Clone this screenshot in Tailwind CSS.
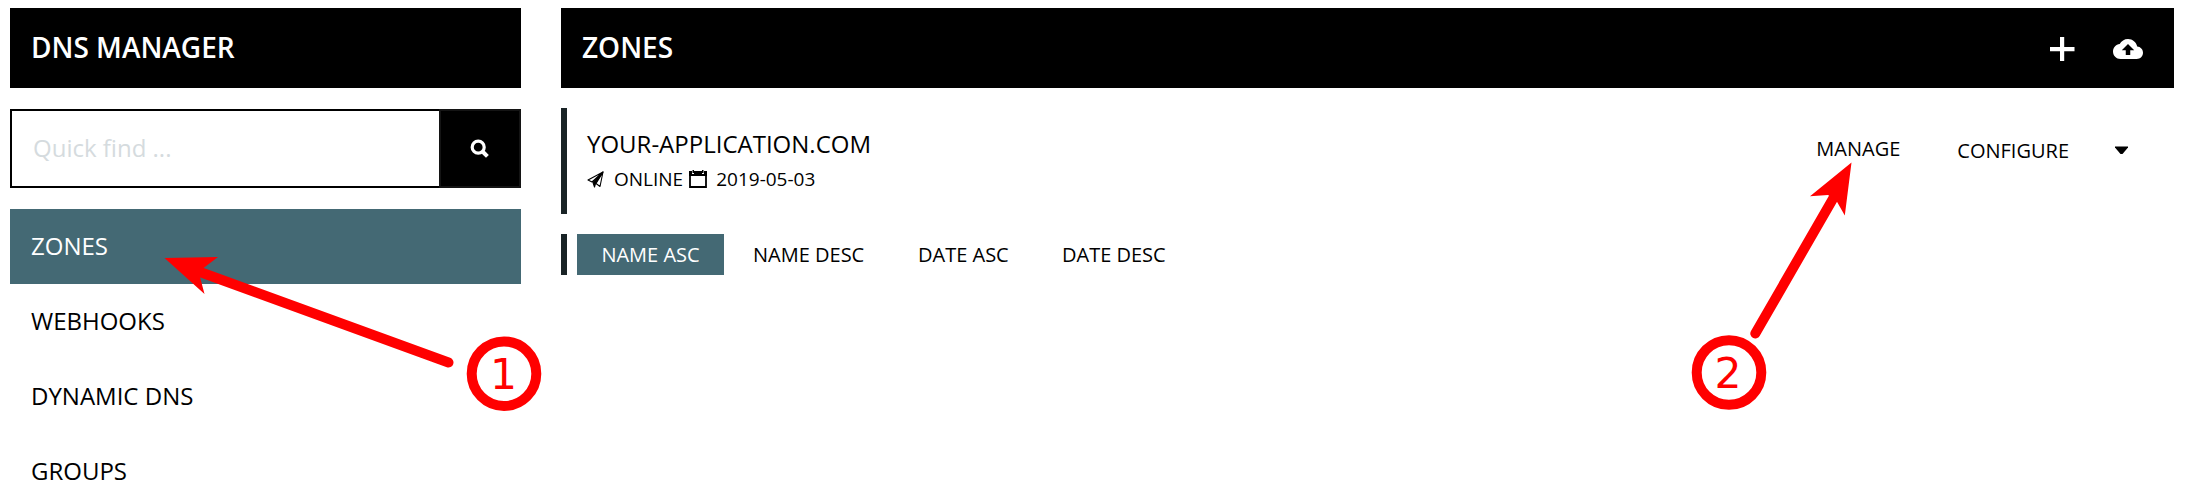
<!DOCTYPE html>
<html lang="en">
<head>
<meta charset="utf-8">
<title>DNS Manager</title>
<script src="https://cdn.jsdelivr.net/npm/@tailwindcss/browser@4"></script>
</head>
<body class="relative flex h-[497px] w-[2186px] gap-10 overflow-hidden bg-white pt-2 pr-3 pl-2.5 font-['Open_Sans',sans-serif] text-black">
  <aside class="flex w-[511px] shrink-0 flex-col">
    <h1 class="flex h-20 shrink-0 items-center bg-black px-[21px] pb-0.5 text-[28px] font-semibold text-white">DNS MANAGER</h1>
    <form class="mt-[21px] flex h-[79px] shrink-0">
      <input class="h-full min-w-0 flex-1 border-2 border-r-0 border-black px-[21px] pb-0.5 text-2xl placeholder:text-[#d5dbde]" placeholder="Quick find ...">
      <button type="button" class="flex w-[82px] items-center justify-center border-2 border-[#141414] bg-black pt-px" aria-label="Search">
        <svg class="size-5" viewBox="0 0 20 20" fill="none" stroke="#fff"><circle cx="8.2" cy="8.2" r="6" stroke-width="3.200"/><path d="M12.500 12.500l4.900 4.900" stroke-width="4"/></svg>
      </button>
    </form>
    <nav class="mt-[21px] flex shrink-0 flex-col text-2xl">
      <a class="flex h-[75px] items-center bg-[#446974] px-[21px] pb-px text-white">ZONES</a>
      <a class="flex h-[75px] items-center px-[21px] pb-px">WEBHOOKS</a>
      <a class="flex h-[75px] items-center px-[21px] pb-px">DYNAMIC DNS</a>
      <a class="flex h-[75px] items-center px-[21px] pb-px">GROUPS</a>
    </nav>
  </aside>
  <main class="flex min-w-0 flex-1 flex-col">
    <header class="flex h-20 items-center bg-black pr-[31px] pl-[21px] text-white">
      <h2 class="flex-1 pb-0.5 text-[28px] font-semibold">ZONES</h2>
      <svg class="mt-[3px] mr-[38px] size-[25px]" viewBox="0 0 25 25" fill="#fff"><path d="M10 0h4.200v10H24.500v4.200H14.200V24H10V14.200H0V10h10z"/></svg>
      <svg class="mt-0.5 h-[20px] w-[30px]" viewBox="0 4 24 16" preserveAspectRatio="none" fill="#fff"><path d="M19.350 10.040C18.670 6.590 15.640 4 12 4 9.110 4 6.600 5.640 5.350 8.040 2.340 8.360 0 10.910 0 14c0 3.310 2.690 6 6 6h13c2.760 0 5-2.240 5-5 0-2.640-2.050-4.780-4.650-4.960zM13.800 13v3.800h-3.600V13H7l5-5 5 5h-3.200z"/></svg>
    </header>
    <section class="mt-5 flex h-[106px] border-l-[6px] border-[#192326] pl-5">
      <div class="flex flex-1 flex-col pt-5">
        <div class="text-2xl leading-8">YOUR-APPLICATION.COM</div>
        <div class="mt-[3px] flex h-8 items-center text-[19px] leading-8">
          <svg class="size-[17px]" viewBox="0 0 17 17" fill="none" stroke="#000" stroke-width="1.100" stroke-linejoin="round"><path d="M16 1L1 9l4 2L16 1l-3 14.500-4-3z"/><path d="M6 11.500L16 1 8.500 12.500 7.500 16z" fill="#000"/></svg>
          <span class="ml-2.5">ONLINE</span>
          <svg class="ml-1.5 h-[18px] w-[18px]" viewBox="0 0 18 18"><path d="M1 2v15h16V2" fill="none" stroke="#000" stroke-width="1.800"/><path d="M0 1h3v3h2V1h8v3h2V1h3v5H0z"/><path d="M3.500 0h1.500v3H3.500zM13 0h1.500v3H13z"/></svg>
          <span class="ml-[9px]">2019-05-03</span>
        </div>
      </div>
      <div class="flex items-start pt-[25px] text-xl leading-8 whitespace-nowrap">
        <span class="mr-[57px]">MANAGE</span>
        <span class="mt-0.5 mr-[46px]">CONFIGURE</span>
        <svg class="mt-[13px] mr-[46px] h-[9px] w-[13px]" viewBox="0 0 13 9"><path d="M0 .5h13v1L7.500 8h-2L0 1.500z"/></svg>
      </div>
    </section>
    <div class="mt-5 flex h-[41px] border-l-[6px] border-[#192326] pl-2.5 text-xl leading-[42px] whitespace-nowrap">
      <span class="w-[147px] bg-[#446974] text-center text-white">NAME ASC</span>
      <span class="ml-[29px] w-[112px]">NAME DESC</span>
      <span class="ml-[53px] w-[91px]">DATE ASC</span>
      <span class="ml-[53px]">DATE DESC</span>
    </div>
  </main>
  <!-- Step annotations laid over the page -->
  <svg class="pointer-events-none absolute inset-0 h-[497px] w-[2186px]" viewBox="0 0 2186 497" fill="#f00" font-family="DejaVu Sans, sans-serif" font-size="42.500">
    <path d="M200 272L448.500 362.500M1834 197L1755.300 333.500" stroke="#f00" stroke-width="10" stroke-linecap="round"/>
    <path d="M164.500 258L218 257 203.500 268 200 277 204.500 294zM1851.500 162.500L1810 196.300 1828 195 1836 200 1844.800 215.500z"/>
    <g fill="none" stroke="#f00" stroke-width="10"><circle cx="504" cy="373.700" r="32.300"/><circle cx="1729" cy="372.500" r="32.300"/></g>
    <text x="490" y="389">1</text><text x="1714.500" y="388">2</text>
  </svg>
</body>
</html>
